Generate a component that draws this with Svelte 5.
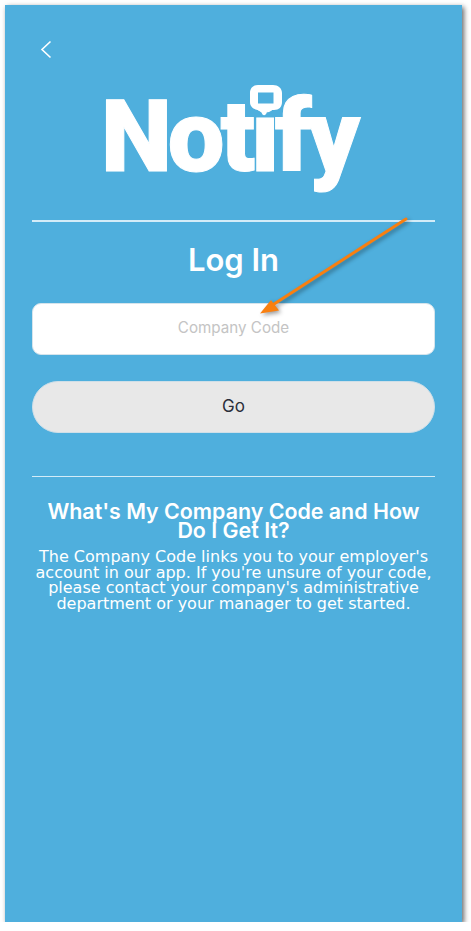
<script>
  let companyCode = '';
</script>

<main class="screen">
  <button class="back" aria-label="Back">
    <svg width="12" height="19" viewBox="0 0 12 19" fill="none">
      <path d="M10.5 1.5 2 9.5l8.5 8" stroke="#fff" stroke-width="1.6" />
    </svg>
  </button>

  <div class="logo">
    <span class="wordmark">Notify</span>
    <svg class="bubble" width="34" height="34" viewBox="0 0 34 34">
      <path
        d="M9 1h15c5 0 9 3 9 8v9c0 5-3 8-8 8h-5c-1 0-2 1-2.500 3-.5 2-2.500 3-4 1.500-1-2.500-2.500-4-5-4.500C4 25 1 22.500 1 18V9c0-5 3-8 8-8Z"
        fill="#fff"
      />
      <rect x="9" y="8.500" width="15.500" height="11" fill="#4fafdd" />
    </svg>
  </div>

  <hr class="rule" />

  <h1>Log In</h1>

  <input class="code" type="text" placeholder="Company Code" bind:value={companyCode} />
  <button class="go">Go</button>

  <hr class="rule second" />

  <h2>What's My Company Code and How Do I Get It?</h2>
  <p>
    The Company Code links you to your employer's account in our app. If you're unsure of your code,
    please contact your company's administrative department or your manager to get started.
  </p>

  <!-- annotation arrow laid over the form -->
  <svg class="arrow" width="457" height="917" viewBox="0 0 457 917" fill="none">
    <path d="M401 214 266 301" stroke="#f97f0f" stroke-width="3" stroke-linecap="round" />
    <path d="M255 308.500 266 295 274 305.500Z" fill="#f97f0f" />
  </svg>
</main>

<style>
  :global(body) {
    margin: 0;
    background: #fff;
  }

  .screen {
    position: relative;
    box-sizing: border-box;
    display: flex;
    flex-direction: column;
    width: 457px;
    height: 917px;
    margin: 5px 0 0 5px;
    padding: 35px 27px 0;
    background: #4fafdd;
    box-shadow: 2px 2px 5px rgba(0, 0, 0, 0.6);
    color: #fff;
    font-family: Inter, "Liberation Sans", sans-serif;
    text-align: center;
  }

  .back {
    align-self: flex-start;
    display: flex;
    width: 12px;
    height: 19px;
    margin-left: 8px;
    padding: 0;
    border: 0;
    background: none;
  }

  .logo {
    position: relative;
    align-self: center;
    height: 103px;
    margin-top: 26px;
    margin-left: -10px;
  }

  .wordmark {
    display: block;
    font-family: Roboto, "Liberation Sans", sans-serif;
    font-size: 101px;
    font-weight: 900;
    line-height: 103px;
    letter-spacing: -4px;
    -webkit-text-stroke: 1px #fff;
  }

  .bubble {
    position: absolute;
    top: -1px;
    left: 148px;
  }

  .rule {
    width: 100%;
    height: 1.500px;
    margin: 32px 0 0;
    border: 0;
    background: #d3ecf8;
  }

  h1 {
    margin: 20px 0 0;
    font-size: 31px;
    font-weight: 600;
    line-height: 36px;
  }

  .code {
    box-sizing: border-box;
    width: 100%;
    height: 52px;
    margin-top: 25px;
    padding: 0 0 2px;
    border: 1px solid #d5e4ec;
    border-radius: 9px;
    background: #fff;
    font: 400 15.200px Inter, "Liberation Sans", sans-serif;
    text-align: center;
  }

  .code::placeholder {
    color: #c4c4c4;
    opacity: 1;
  }

  .go {
    height: 52px;
    margin-top: 26px;
    padding: 0 0 2px;
    border: 1px solid #cfdfe8;
    border-radius: 26px;
    background: #e8e8e8;
    color: #2b2f3a;
    font: 400 17px Inter, "Liberation Sans", sans-serif;
  }

  .second {
    margin-top: 43px;
  }

  h2 {
    margin: 25px 10px 0;
    font-size: 21.400px;
    font-weight: 600;
    line-height: 19px;
  }

  p {
    margin: 9px 0 0;
    font-family: "DejaVu Sans", sans-serif;
    font-size: 16px;
    font-weight: 400;
    line-height: 15.600px;
  }

  .arrow {
    position: absolute;
    top: 0;
    left: 0;
    pointer-events: none;
    filter: drop-shadow(2px 2px 2px rgba(0, 0, 0, 0.4));
  }
</style>
